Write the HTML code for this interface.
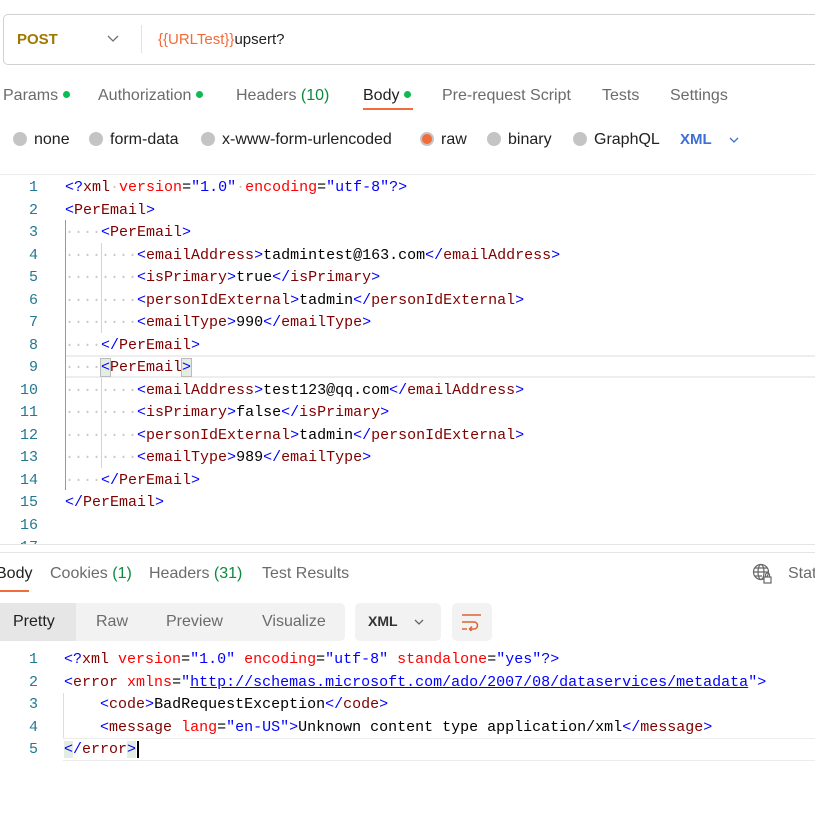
<!DOCTYPE html>
<html><head><meta charset="utf-8"><style>
*{margin:0;padding:0;box-sizing:border-box}
body{width:815px;height:813px;overflow:hidden;background:#fff;font-family:"Liberation Sans",sans-serif;position:relative;color:#212121}
.a{position:absolute;white-space:nowrap}
.ui{font-size:16px;color:#6b6b6b}
.dot{display:inline-block;width:7px;height:7px;border-radius:50%;background:#0cbb52;margin-left:5px;vertical-align:2px}
.rad{display:inline-block;width:14px;height:14px;border-radius:50%;background:#c4c4c4;vertical-align:-2px;margin-right:7px}
.code{font-family:"Liberation Mono",monospace;font-size:15px;line-height:22.5px;height:22.5px;color:#000;white-space:pre}
.ln{font-family:"Liberation Mono",monospace;font-size:15px;color:#237893;width:38px;text-align:right;line-height:22.5px}
.b{color:#0000ff}.t{color:#800000}.r{color:#ff0000}.v{color:#0000ff}
.ws{color:#c8c8c8}
.guide{position:absolute;width:1px;background:#d3d3d3}
</style></head><body>
<!-- URL bar -->
<div class="a" style="left:3px;top:14px;width:830px;height:51px;border:1px solid #d0d0d0;border-radius:5px"></div>
<div class="a" style="left:17px;top:31px;font-size:15px;font-weight:bold;color:#a07800">POST</div>
<svg class="a" style="left:107px;top:35px" width="12" height="8"><path d="M1 1 L6 6 L11 1" fill="none" stroke="#707070" stroke-width="1.3"/></svg>
<div class="a" style="left:141px;top:25px;width:1px;height:28px;background:#e2e2e2"></div>
<div class="a" style="left:158px;top:31px;font-size:15px"><span style="color:#f26b3a">{{URLTest}}</span>upsert?</div>
<!-- tabs -->
<div class="a ui" style="left:3px;top:87px">Params<span class="dot"></span></div>
<div class="a ui" style="left:98px;top:87px">Authorization<span class="dot"></span></div>
<div class="a ui" style="left:236px;top:87px">Headers <span style="color:#0c8a3e">(10)</span></div>
<div class="a ui" style="left:363px;top:87px;color:#212121">Body<span class="dot"></span></div>
<div class="a" style="left:363px;top:108px;width:50px;height:2px;background:#f26b3a"></div>
<div class="a ui" style="left:442px;top:87px">Pre-request Script</div>
<div class="a ui" style="left:602px;top:87px">Tests</div>
<div class="a ui" style="left:670px;top:87px">Settings</div>
<!-- radios -->
<div class="a ui" style="left:13px;top:131px;color:#212121"><span class="rad"></span>none</div>
<div class="a ui" style="left:89px;top:131px;color:#212121"><span class="rad"></span>form-data</div>
<div class="a ui" style="left:201px;top:131px;color:#212121"><span class="rad"></span>x-www-form-urlencoded</div>
<div class="a ui" style="left:420px;top:131px;color:#212121"><span class="rad" style="background:#f26b3a;border:2px solid #c4c4c4"></span>raw</div>
<div class="a ui" style="left:487px;top:131px;color:#212121"><span class="rad"></span>binary</div>
<div class="a ui" style="left:573px;top:131px;color:#212121"><span class="rad"></span>GraphQL</div>
<div class="a" style="left:680px;top:131px;font-size:15px;font-weight:bold;color:#3d6fd6">XML</div>
<svg class="a" style="left:729px;top:137px" width="10" height="7"><path d="M1 1 L5 5 L9 1" fill="none" stroke="#3d6fd6" stroke-width="1.3"/></svg>
<div class="a" style="left:0;top:174px;width:815px;height:1px;background:#ececec"></div>
<!-- editor -->
<div class="a" style="left:0;top:175px;width:815px;height:369px;overflow:hidden">
<div class="a" style="left:66px;top:180px;width:749px;height:23px;border-top:2px solid #eee;border-bottom:2px solid #eee"></div>
<div class="guide" style="left:65px;top:45px;height:270px;background:#999"></div>
<div class="guide" style="left:101px;top:68px;height:90px"></div>
<div class="guide" style="left:101px;top:203px;height:90px"></div>
<div class="a" style="left:0;top:2px">
<div class="ln">1</div><div class="ln">2</div><div class="ln">3</div><div class="ln">4</div><div class="ln">5</div><div class="ln">6</div><div class="ln">7</div><div class="ln">8</div><div class="ln">9</div><div class="ln">10</div><div class="ln">11</div><div class="ln">12</div><div class="ln">13</div><div class="ln">14</div><div class="ln">15</div><div class="ln">16</div><div class="ln">17</div>
</div>
<div class="a" style="left:65px;top:2px">
<div class="code"><span class="b">&lt;?</span><span class="t">xml</span><span class="ws">·</span><span class="r">version</span>=<span class="v">"1.0"</span><span class="ws">·</span><span class="r">encoding</span>=<span class="v">"utf-8"</span><span class="b">?&gt;</span></div>
<div class="code"><span class="b">&lt;</span><span class="t">PerEmail</span><span class="b">&gt;</span></div>
<div class="code"><span class="ws">····</span><span class="b">&lt;</span><span class="t">PerEmail</span><span class="b">&gt;</span></div>
<div class="code"><span class="ws">········</span><span class="b">&lt;</span><span class="t">emailAddress</span><span class="b">&gt;</span>tadmintest@163.com<span class="b">&lt;/</span><span class="t">emailAddress</span><span class="b">&gt;</span></div>
<div class="code"><span class="ws">········</span><span class="b">&lt;</span><span class="t">isPrimary</span><span class="b">&gt;</span>true<span class="b">&lt;/</span><span class="t">isPrimary</span><span class="b">&gt;</span></div>
<div class="code"><span class="ws">········</span><span class="b">&lt;</span><span class="t">personIdExternal</span><span class="b">&gt;</span>tadmin<span class="b">&lt;/</span><span class="t">personIdExternal</span><span class="b">&gt;</span></div>
<div class="code"><span class="ws">········</span><span class="b">&lt;</span><span class="t">emailType</span><span class="b">&gt;</span>990<span class="b">&lt;/</span><span class="t">emailType</span><span class="b">&gt;</span></div>
<div class="code"><span class="ws">····</span><span class="b">&lt;/</span><span class="t">PerEmail</span><span class="b">&gt;</span></div>
<div class="code"><span class="ws">····</span><span class="b" style="background:#e3ede3;outline:1px solid #bbb">&lt;</span><span class="t">PerEmail</span><span class="b" style="background:#e3ede3;outline:1px solid #bbb">&gt;</span></div>
<div class="code"><span class="ws">········</span><span class="b">&lt;</span><span class="t">emailAddress</span><span class="b">&gt;</span>test123@qq.com<span class="b">&lt;/</span><span class="t">emailAddress</span><span class="b">&gt;</span></div>
<div class="code"><span class="ws">········</span><span class="b">&lt;</span><span class="t">isPrimary</span><span class="b">&gt;</span>false<span class="b">&lt;/</span><span class="t">isPrimary</span><span class="b">&gt;</span></div>
<div class="code"><span class="ws">········</span><span class="b">&lt;</span><span class="t">personIdExternal</span><span class="b">&gt;</span>tadmin<span class="b">&lt;/</span><span class="t">personIdExternal</span><span class="b">&gt;</span></div>
<div class="code"><span class="ws">········</span><span class="b">&lt;</span><span class="t">emailType</span><span class="b">&gt;</span>989<span class="b">&lt;/</span><span class="t">emailType</span><span class="b">&gt;</span></div>
<div class="code"><span class="ws">····</span><span class="b">&lt;/</span><span class="t">PerEmail</span><span class="b">&gt;</span></div>
<div class="code"><span class="b">&lt;/</span><span class="t">PerEmail</span><span class="b">&gt;</span></div>
</div>
</div>
<div class="a" style="left:0;top:544px;width:815px;height:1px;background:#e4e4e4"></div>
<div class="a" style="left:0;top:552px;width:815px;height:1px;background:#e4e4e4"></div>
<!-- response tabs -->
<div class="a ui" style="left:-4px;top:565px;color:#212121">Body</div>
<div class="a" style="left:0;top:590px;width:29px;height:2px;background:#f26b3a"></div>
<div class="a ui" style="left:50px;top:565px">Cookies <span style="color:#0c8a3e">(1)</span></div>
<div class="a ui" style="left:149px;top:565px">Headers <span style="color:#0c8a3e">(31)</span></div>
<div class="a ui" style="left:262px;top:565px">Test Results</div>
<svg class="a" style="left:752px;top:563px" width="22" height="22" viewBox="0 0 22 22" fill="none" stroke="#666" stroke-width="1.2"><circle cx="9" cy="9" r="7.5"/><ellipse cx="9" cy="9" rx="3" ry="7.5"/><path d="M1.5 9h15M3 5h12M3 13h7"/><rect x="12" y="14" width="7" height="6" fill="#fff"/><path d="M13.5 14v-2a2 2 0 0 1 4 0v2"/></svg>
<div class="a ui" style="left:788px;top:565px">Stat</div>
<!-- pretty bar -->
<div class="a" style="left:0;top:603px;width:345px;height:38px;background:#f2f2f2;border-radius:0 5px 5px 0"></div>
<div class="a" style="left:0;top:603px;width:76px;height:38px;background:#e6e6e6"></div>
<div class="a ui" style="left:13px;top:613px;color:#212121">Pretty</div>
<div class="a ui" style="left:96px;top:613px">Raw</div>
<div class="a ui" style="left:166px;top:613px">Preview</div>
<div class="a ui" style="left:262px;top:613px">Visualize</div>
<div class="a" style="left:355px;top:603px;width:86px;height:38px;background:#f2f2f2;border-radius:5px"></div>
<div class="a" style="left:368px;top:613px;font-size:14px;font-weight:bold;color:#333">XML</div>
<svg class="a" style="left:414px;top:619px" width="10" height="7"><path d="M1 1 L5 5 L9 1" fill="none" stroke="#666" stroke-width="1.3"/></svg>
<div class="a" style="left:452px;top:603px;width:40px;height:38px;background:#f2f2f2;border-radius:5px"></div>
<svg class="a" style="left:461px;top:613px" width="22" height="18" fill="none" stroke="#e0622e" stroke-width="1.5"><path d="M1 2h19M1 9h12a3.5 3.5 0 0 1 0 7h-4M11 13.5l-2.5 2.5 2.5 2.5M1 16h5"/></svg>
<!-- response code -->
<div class="a" style="left:0;top:648px;width:815px;height:120px">
<div class="a" style="left:63px;top:90px;width:752px;height:23px;border-top:1px solid #ececec;border-bottom:1px solid #ececec"></div>
<div class="guide" style="left:63px;top:45px;height:45px;background:#ddd"></div>
<div class="a" style="left:0;top:1px"><div class="ln">1</div><div class="ln">2</div><div class="ln">3</div><div class="ln">4</div><div class="ln">5</div></div>
<div class="a" style="left:64px;top:1px">
<div class="code"><span class="b">&lt;?</span><span class="t">xml</span> <span class="r">version</span>=<span class="v">"1.0"</span> <span class="r">encoding</span>=<span class="v">"utf-8"</span> <span class="r">standalone</span>=<span class="v">"yes"</span><span class="b">?&gt;</span></div>
<div class="code"><span class="b">&lt;</span><span class="t">error</span> <span class="r">xmlns</span>=<span class="v">"<span style="text-decoration:underline">http://schemas.microsoft.com/ado/2007/08/dataservices/metadata</span>"</span><span class="b">&gt;</span></div>
<div class="code">    <span class="b">&lt;</span><span class="t">code</span><span class="b">&gt;</span>BadRequestException<span class="b">&lt;/</span><span class="t">code</span><span class="b">&gt;</span></div>
<div class="code">    <span class="b">&lt;</span><span class="t">message</span> <span class="r">lang</span>=<span class="v">"en-US"</span><span class="b">&gt;</span>Unknown content type application/xml<span class="b">&lt;/</span><span class="t">message</span><span class="b">&gt;</span></div>
<div class="code"><span class="b" style="background:#e3ede3">&lt;</span><span class="b">/</span><span class="t">error</span><span class="b" style="background:#e3ede3">&gt;</span><span style="border-left:2px solid #000;margin-left:1px"></span></div>
</div>
</div>
</body></html>
